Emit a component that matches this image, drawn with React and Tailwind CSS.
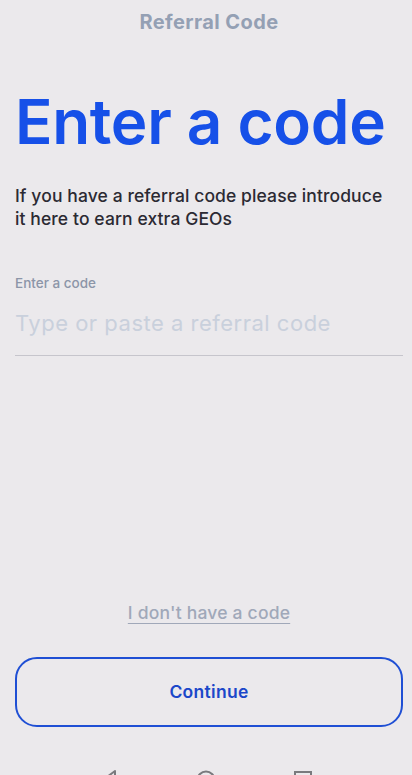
import React from 'react';

const App = () => {
    return (
        <div className="relative h-[775px] w-[412px] overflow-hidden bg-[#ebe9ec] font-['Inter',sans-serif]">
            <div className="flex flex-col pl-[15px] pr-[9px]">
                <header className="pt-[7px] text-center text-[20px] font-bold tracking-[0.4px] text-[#94a0b4]">
                    Referral Code
                </header>

                <h1 className="mt-[54px] text-[62px] font-semibold leading-none tracking-[-0.3px] text-[#1650e8]">
                    Enter a code
                </h1>

                <p className="mt-[31px] pr-[8px] text-[17.5px] font-medium leading-[23px] tracking-[0.1px] text-[#2b2a33]">
                    If you have a referral code please introduce it here to earn extra GEOs
                </p>

                <label className="mt-[43px] text-[13.5px] font-medium text-[#8c95a8]">Enter a code</label>
                <input
                    type="text"
                    placeholder="Type or paste a referral code"
                    className="mt-[14px] w-full border-b border-[#c6c5cc] bg-transparent pb-[15px] text-[22px] tracking-[0.5px] outline-none placeholder:text-[#c9d0dc]"
                />
            </div>

            <div className="absolute left-[15px] right-[9px] top-[600px] flex flex-col items-center">
                <button className="text-[17.5px] font-medium tracking-[0.2px] text-[#a0a8b9] underline underline-offset-[4px]">
                    I don't have a code
                </button>
                <button className="mt-[31px] flex h-[70px] w-full items-center justify-center rounded-[22px] border-2 border-[#1f4fd4] text-[17.5px] font-semibold tracking-[0.3px] text-[#1b47c9]">
                    Continue
                </button>
            </div>

            {/* android nav bar, cut off at the bottom */}
            <div className="absolute left-0 right-0 top-[769px] flex justify-between px-[98px]">
                <svg width="22" height="22" viewBox="0 0 22 22">
                    <path d="M17 2 L5 11 L17 20 Z" fill="none" stroke="#7a7a7e" strokeWidth="2" strokeLinejoin="round" />
                </svg>
                <svg width="22" height="22" viewBox="0 0 22 22">
                    <circle cx="11" cy="11" r="8.5" fill="none" stroke="#7a7a7e" strokeWidth="2" />
                </svg>
                <svg width="22" height="22" viewBox="0 0 22 22">
                    <rect x="3" y="3" width="16" height="16" fill="none" stroke="#7a7a7e" strokeWidth="2" />
                </svg>
            </div>
        </div>
    );
};

export default App;
